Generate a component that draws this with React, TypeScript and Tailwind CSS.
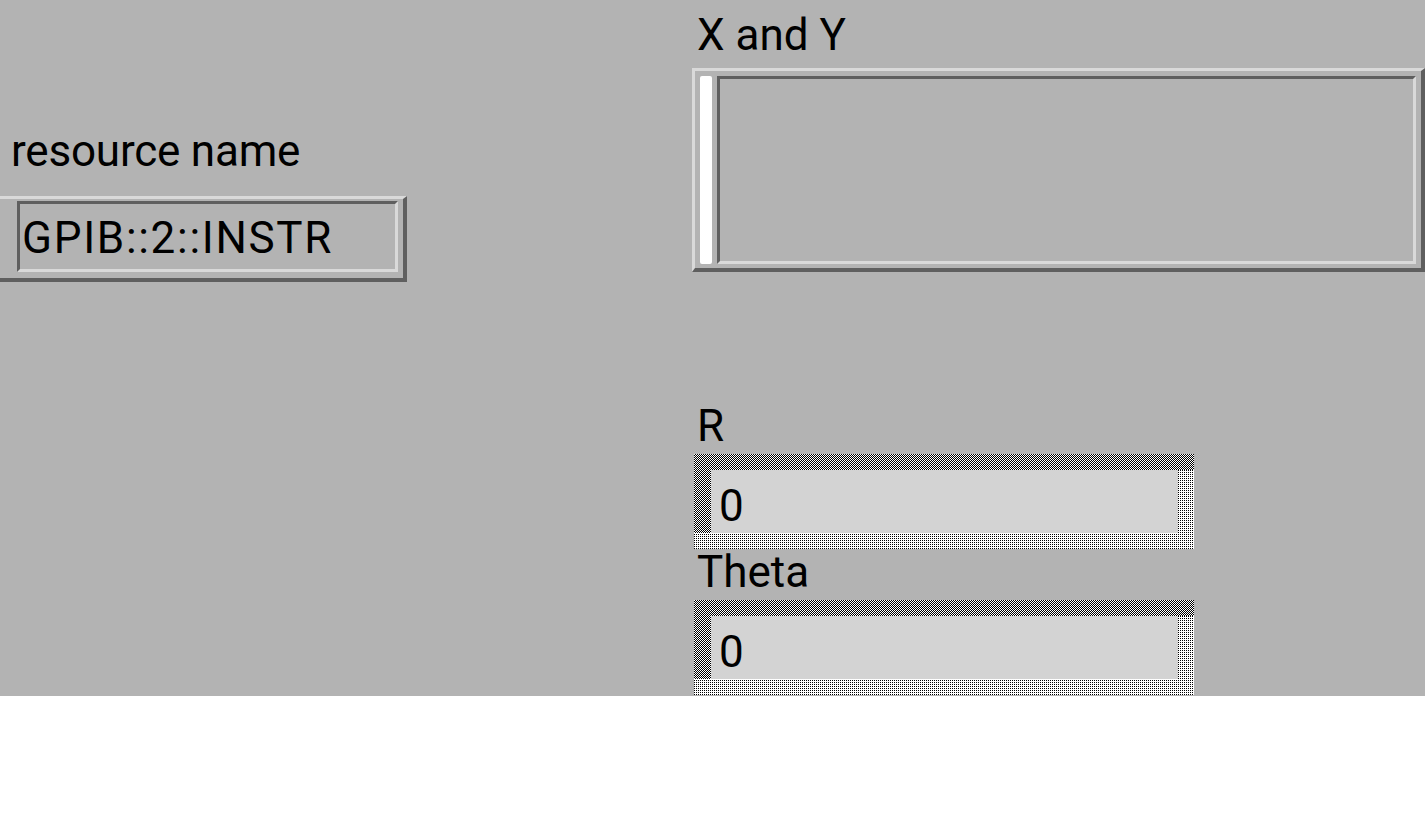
const raised = 'border-t-[3px] border-l-[3px] border-r-[4px] border-b-[4px] border-t-[#d9d9d9] border-l-[#d9d9d9] border-r-[#5f5f5f] border-b-[#5f5f5f]'
// same relief but with the left edge running off the window
const raisedNoLeft = 'border-t-[3px] border-r-[4px] border-b-[4px] border-t-[#d9d9d9] border-r-[#5f5f5f] border-b-[#5f5f5f]'
const sunken = 'border-[3px] border-t-[#5f5f5f] border-l-[#5f5f5f] border-r-[#d9d9d9] border-b-[#d9d9d9]'

// 1px stipple fills used for the disabled entry relief
const stippleDense = 'bg-[repeating-conic-gradient(#000_0_25%,#fff_0_50%)] bg-[length:2px_2px]'
const stippleSparse = 'bg-[conic-gradient(from_270deg_at_1px_1px,#000_0_25%,#fff_0)] bg-[length:2px_2px]'

function Label({ children, className = '' }: { children: React.ReactNode; className?: string }) {
  return <div className={`pl-[5px] leading-[46px] ${className}`}>{children}</div>
}

function StippleEntry({ value }: { value: string }) {
  return (
    <div className={`ml-[2px] mt-[5px] flex w-[500px] flex-col pb-[16px] ${stippleSparse}`}>
      <div className={`h-[16px] w-full ${stippleDense}`} />
      <div className="mr-[16px] flex h-[63px]">
        <div className={`w-[17px] ${stippleDense}`} />
        <div className="flex-1 bg-[#d3d3d3] pl-[8px] pt-[13px] leading-[46px]">{value}</div>
      </div>
    </div>
  )
}

export default function App() {
  return (
    <div className="flex h-[696px] w-full overflow-hidden bg-[#b3b3b3] font-['Roboto','Liberation_Sans',sans-serif] text-[44px] text-black">
      <div className="w-[692px] shrink-0 pt-[128px]">
        <div className="pl-[11px] leading-[46px] tracking-[-0.2px]">resource name</div>
        <div className={`mt-[22px] w-[407px] pb-[6px] pl-[17px] pr-[5px] pt-[2px] ${raisedNoLeft}`}>
          <div className={`h-[71px] ${sunken}`}>
            <div className="pl-[2px] pt-[11px] leading-[46px] tracking-[1.7px]">GPIB::2::INSTR</div>
          </div>
        </div>
      </div>

      <div className="flex-1 pt-[10px]">
        <Label className="pt-[2px]">X and Y</Label>
        <div className={`mt-[10px] flex h-[204px] gap-[5px] p-[5px] pb-[4px] ${raised}`}>
          <div className="w-[12px] rounded-[2px] bg-white" />
          <div className={`flex-1 ${sunken}`} />
        </div>

        <div className="mt-[131px]">
          <Label>R</Label>
          <StippleEntry value="0" />
          <Label>Theta</Label>
          <StippleEntry value="0" />
        </div>
      </div>
    </div>
  )
}
